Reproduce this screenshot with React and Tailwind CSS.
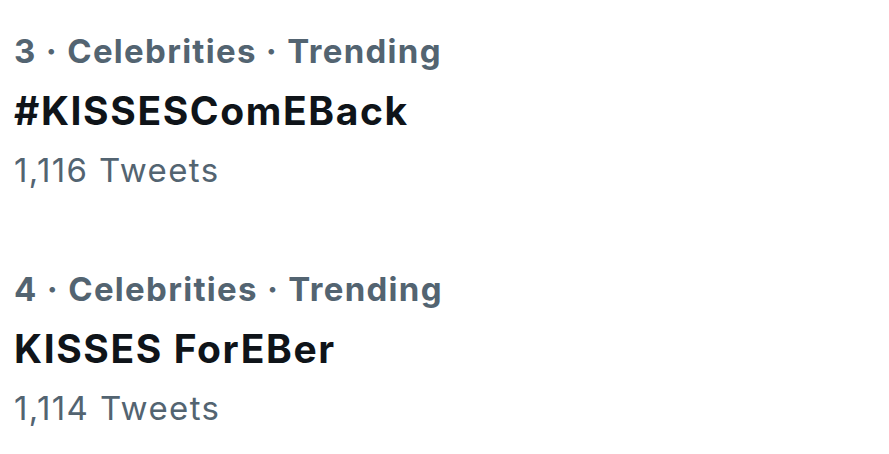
const trends = [
  { rank: 3, category: "Celebrities", title: "#KISSESComEBack", count: "1,116" },
  { rank: 4, category: "Celebrities", title: "KISSES ForEBer", count: "1,114" },
];

export default function App() {
  return (
    <div className="h-[454px] w-[889px] overflow-hidden bg-white pl-[14px] pt-[25px] font-['Inter',sans-serif]">
      <div className="flex flex-col gap-[67px]">
        {trends.map((t) => (
          <div key={t.rank} className="flex flex-col">
            <div className="text-[33px] font-bold leading-[53px] tracking-[1.3px] text-[#536471]">
              {t.rank} · {t.category} · Trending
            </div>
            <div className="text-[39px] font-bold leading-[66px] tracking-[1.6px] text-[#0f1419]">
              {t.title}
            </div>
            <div className="text-[33px] leading-[52px] tracking-[1.4px] text-[#536471]">
              {t.count} Tweets
            </div>
          </div>
        ))}
      </div>
    </div>
  );
}
